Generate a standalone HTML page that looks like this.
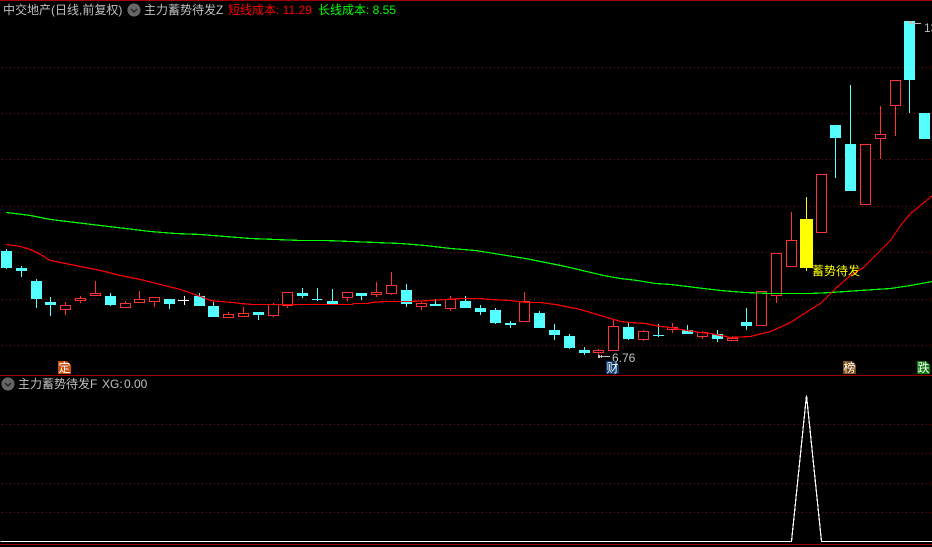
<!DOCTYPE html>
<html lang="zh">
<head>
<meta charset="utf-8">
<title>中交地产</title>
<style>
html,body{margin:0;padding:0;background:#000;}
#w{position:relative;width:932px;height:547px;overflow:hidden;background:#000;}
svg{position:absolute;left:0;top:0;}
.t{position:absolute;white-space:nowrap;font:12px/14px "Liberation Sans","WenQuanYi Zen Hei","Noto Sans CJK SC",sans-serif;color:#c0c0c0;}
.tag{position:absolute;width:13px;height:13px;line-height:13px;text-align:center;color:#fff;font:12px/13px "WenQuanYi Zen Hei","Noto Sans CJK SC",sans-serif;clip-path:polygon(0 0,9px 0,13px 4px,13px 13px,0 13px);}
</style>
</head>
<body>
<div id="w">
<svg width="932" height="547" viewBox="0 0 932 547" shape-rendering="crispEdges">
<!-- frame lines -->
<path d="M0 .5H932M0 375.5H932M0 544.5H932" stroke="#a00000" fill="none"/>
<!-- grid -->
<path d="M2 67.5H932M2 113.5H932M2 159.5H932M2 206.5H932M2 252.5H932M2 299.5H932M2 345.5H932M2 424.5H932M2 453.5H932M2 483.5H932M2 512.5H932" stroke="#7a1010" stroke-dasharray="1 3" fill="none"/>
<!-- red wicks -->
<path stroke="#ff3232" fill="none" d="M65.5 302V305M65.5 310V315M80.5 296V298M80.5 301V303M95.5 281V293M125.5 301V303M139.5 291V299M154.5 302V307M228.5 312V314M243.5 307V313M273.5 303V304M273.5 316V317M287.5 306V308M347.5 298V301M376.5 282V292M376.5 295V297M391.5 272V285M391.5 294V295M421.5 302V303M421.5 307V310M450.5 296V299M450.5 309V311M524.5 292V301M598.5 349V350M598.5 353V355M613.5 319V326M643.5 330V331M643.5 340V341M672.5 323V327M672.5 330V333M702.5 331V332M702.5 337V339M732.5 336V338M776.5 296V303M791.5 212V240M880.5 106V134M880.5 139V159M895.5 106V136"/>
<!-- red bodies -->
<path stroke="#ff3232" fill="#000" d="M60.5 305.5h10v4h-10zM75.5 298.5h10v2h-10zM90.5 293.5h10v2h-10zM120.5 303.5h10v4h-10zM134.5 299.5h10v3h-10zM149.5 297.5h10v4h-10zM223.5 314.5h10v3h-10zM238.5 313.5h10v3h-10zM268.5 304.5h10v11h-10zM282.5 292.5h10v13h-10zM342.5 292.5h10v5h-10zM371.5 292.5h10v2h-10zM386.5 285.5h10v8h-10zM416.5 303.5h10v3h-10zM445.5 299.5h10v9h-10zM519.5 301.5h10v20h-10zM593.5 350.5h10v2h-10zM608.5 326.5h10v24h-10zM638.5 331.5h10v8h-10zM667.5 327.5h10v2h-10zM697.5 332.5h10v4h-10zM727.5 338.5h10v2h-10zM756.5 291.5h10v34h-10zM771.5 253.5h10v42h-10zM786.5 240.5h10v26h-10zM816.5 174.5h10v58h-10zM860.5 144.5h10v60h-10zM875.5 134.5h10v4h-10zM890.5 80.5h10v25h-10z"/>
<!-- cyan wicks -->
<path stroke="#54ffff" fill="none" d="M6.5 249V269M21.5 266V277M36.5 279V308M50.5 297V316M110.5 293V306M169.5 299V309M199.5 293V306M213.5 302V317M258.5 312V320M302.5 288V298M317.5 288V301M332.5 289V304M361.5 293V300M406.5 284V307M435.5 299V306M465.5 296V308M480.5 305V315M495.5 308V324M510.5 321V328M539.5 311V328M554.5 324V340M569.5 334V349M584.5 347V355M628.5 323V340M658.5 324V337M687.5 325V334M717.5 330V342M746.5 308V330M835.5 125V178M850.5 85V191M909.5 21V113"/>
<!-- cyan bodies -->
<path fill="#54ffff" d="M1 251h11v17h-11zM16 268h11v3h-11zM31 281h11v18h-11zM45 302h11v3h-11zM105 296h11v9h-11zM164 299h11v5h-11zM194 296h11v10h-11zM208 306h11v11h-11zM253 312h11v3h-11zM297 293h11v3h-11zM312 299h10v1h-10zM327 301h11v3h-11zM356 293h11v3h-11zM401 290h11v14h-11zM430 304h11v2h-11zM460 301h11v7h-11zM475 308h11v4h-11zM490 310h11v13h-11zM505 323h11v2h-11zM534 313h11v15h-11zM549 330h11v5h-11zM564 336h11v12h-11zM579 350h11v3h-11zM623 327h11v12h-11zM653 335h11v1h-11zM682 330h11v4h-11zM712 334h11v5h-11zM741 322h11v4h-11zM830 125h11v13h-11zM845 144h11v47h-11zM904 21h11v59h-11zM919 113h11v26h-11z"/>
<!-- white cross -->
<path stroke="#fff" fill="none" d="M178 300.5H189M184.5 296V305"/>
<!-- yellow candle -->
<path stroke="#ffff00" fill="none" d="M806.5 197V219M806.5 268V271"/>
<rect x="800" y="219" width="13" height="49" fill="#ffff00"/>
<g transform="translate(.5 .5)" fill="none" stroke-width="1.2">
<!-- green line -->
<polyline stroke="#00ff00" points="6,212 30,215 50,219 75,222 100,225 125,228 150,231 175,233 200,234 225,236 250,238 275,239 300,240 325,240 350,241 375,242 400,243 425,245 450,248 475,250 500,254 525,258 550,263 565,266 582,270 603,275 620,278 637,280 655,283 670,284 687,286 703,288 720,290 745,292 770,293 810,293 830,292 860,290 890,288 910,285 932,281"/>
<!-- red line -->
<polyline stroke="#ff0000" points="6,244 20,246 30,249 40,254 50,260 60,262 80,266 100,270 120,275 140,279 160,284 180,289 200,296 210,300 220,301 233,302 240,303 252,304 300,304 352,304 353,303 368,303 370,302 385,301 410,301 430,300 460,298 480,298 490,299 510,300 525,302 540,302 555,304 570,307 580,309 590,312 600,315 610,318 620,321 630,322 645,323 660,326 670,327 680,329 700,332 710,333 730,337 750,336 770,331 790,322 810,309 820,303 835,288 850,275 863,267 873,257 883,247 890,240 900,225 910,213 920,205 932,195"/>
<!-- indicator F -->
<polyline stroke="#fff" points="0,541 791,541 806,395 821,541 932,541"/>
</g>
<!-- arrows -->
<path stroke="#c0c0c0" fill="none" d="M599 356.5H610M601 355.5h1M601 357.5h1M911 23.5H921"/>
<rect x="598" y="355" width="2" height="3" fill="#c0c0c0"/>
<rect x="909" y="21" width="3" height="3" fill="#c0c0c0"/>
<!-- collapse icons -->
<circle cx="134" cy="10" r="6.5" fill="#666"/>
<path d="M131 9l3 3 3-3" stroke="#222" stroke-width="1.4" fill="none" shape-rendering="auto"/>
<circle cx="8" cy="384" r="6.5" fill="#666"/>
<path d="M5 383l3 3 3-3" stroke="#222" stroke-width="1.4" fill="none" shape-rendering="auto"/>
</svg>

<div class="t" style="left:3px;top:3px;">中交地产(日线,前复权)</div>
<div class="t" style="left:144px;top:3px;">主力蓄势待发Z</div>
<div class="t" style="left:228px;top:3px;color:#ff0000;">短线成本: 11.29</div>
<div class="t" style="left:318px;top:3px;color:#00ff00;">长线成本: 8.55</div>
<div class="t" style="left:18px;top:377px;">主力蓄势待发F</div>
<div class="t" style="left:102px;top:377px;">XG:</div>
<div class="t" style="left:124px;top:377px;">0.00</div>
<div class="t" style="left:812px;top:264px;color:#ffff00;">蓄势待发</div>
<div class="t" style="left:612px;top:351px;">6.76</div>
<div class="t" style="left:924px;top:21px;">13</div>

<div class="tag" style="left:58px;top:361px;background:#c8500f;">定</div>
<div class="tag" style="left:606px;top:361px;background:#0a3a6e;">财</div>
<div class="tag" style="left:843px;top:361px;background:#804a14;">榜</div>
<div class="tag" style="left:917px;top:361px;background:#0a7a0a;">跌</div>
</div>
</body>
</html>
